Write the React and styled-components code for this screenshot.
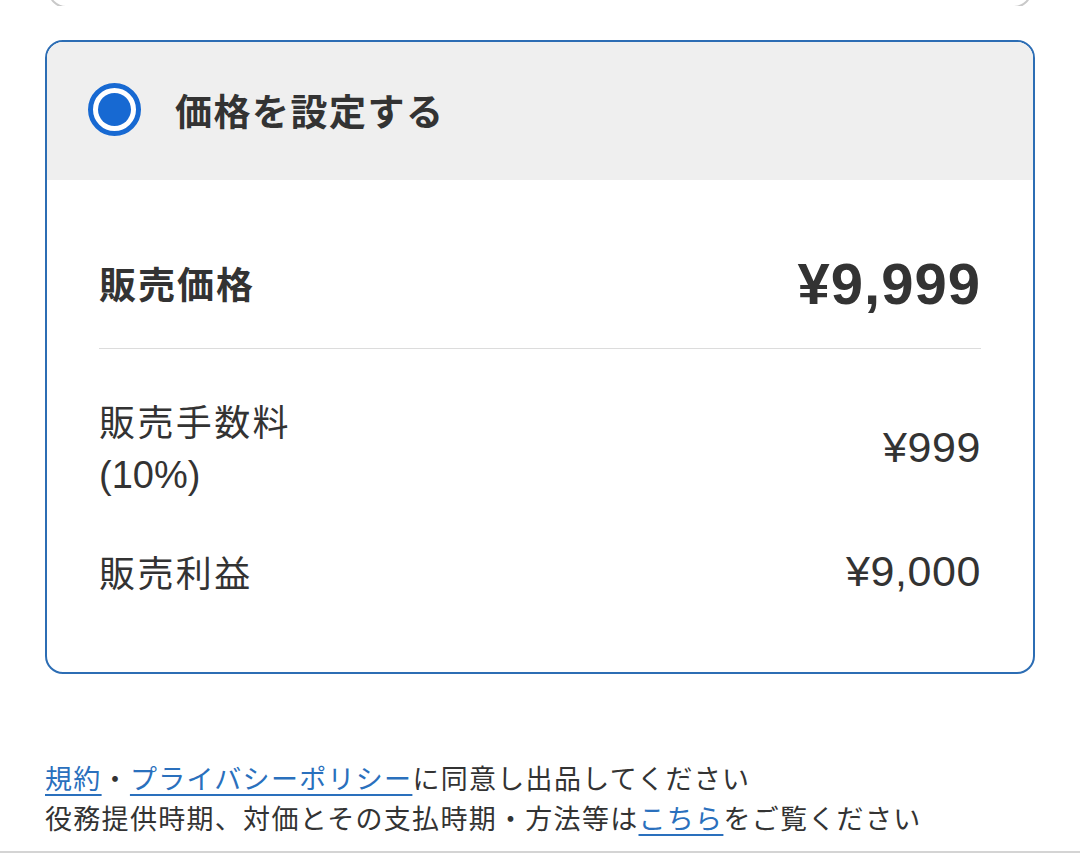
import styled, { createGlobalStyle } from "styled-components";

const GlobalStyle = createGlobalStyle`
    html, body {
        margin: 0;
        padding: 0;
        background: #ffffff;
    }
    body {
        font-family: "Liberation Sans", "Noto Sans CJK JP", sans-serif;
        color: #333333;
    }
`

const Page = styled.div`
    width: 1080px;
    height: 853px;
    overflow: hidden;
    display: flex;
    flex-direction: column;
    box-sizing: border-box;
    border-bottom: 2px solid #d4d4d4;
`

/* bottom edge of the option above, scrolled mostly out of view */
const PrevClip = styled.div`
    height: 6px;
    overflow: hidden;
    padding: 0 48px 0 48px;
`

const PrevOption = styled.div`
    height: 60px;
    margin-top: -56px;
    border: 2px solid #c9c9c9;
    border-radius: 18px;
`

const Card = styled.div`
    margin: 34px 45px 0 45px;
    border: 2px solid #2c6db4;
    border-radius: 18px;
    overflow: hidden;
`

const CardHeader = styled.div`
    height: 138px;
    background: #efefef;
    display: flex;
    align-items: center;
    padding-left: 41px;
    padding-bottom: 3px;
    box-sizing: border-box;
    gap: 34px;
`

const Radio = styled.span`
    width: 53px;
    height: 53px;
    box-sizing: border-box;
    border-radius: 50%;
    border: 5px solid #1769d2;
    background: #ffffff;
    display: flex;
    align-items: center;
    justify-content: center;
    &::after {
        content: "";
        width: 33px;
        height: 33px;
        border-radius: 50%;
        background: #1769d2;
    }
`

const Title = styled.span`
    font-family: "Noto Sans CJK JP", sans-serif;
    font-size: 37px;
    font-weight: 700;
    color: #333333;
    letter-spacing: 1.5px;
`

const CardBody = styled.div`
    padding: 68px 52px 75px 52px;
    display: flex;
    flex-direction: column;
`

const Row = styled.div`
    display: flex;
    justify-content: space-between;
    align-items: center;
    margin-top: ${props => props.gap || 0}px;
`

const Label = styled.div`
    font-family: "Noto Sans CJK JP", sans-serif;
    font-size: ${props => props.bold ? 37 : 36}px;
    font-weight: ${props => props.bold ? 700 : 400};
    line-height: ${props => props.bold ? 70 : 52}px;
    letter-spacing: ${props => props.bold ? 2 : 2.4}px;
    .latin {
        font-family: "Liberation Sans", sans-serif;
        letter-spacing: 0;
        font-size: 38px;
    }
`

const Amount = styled.div`
    font-family: "Liberation Sans", sans-serif;
    font-size: ${props => props.big ? 58 : 43}px;
    font-weight: ${props => props.big ? 700 : 400};
    letter-spacing: ${props => props.big ? 1 : 0.6}px;
    color: #333333;
`

const Divider = styled.hr`
    border: none;
    border-top: 1px solid #dcdcdc;
    margin: 30px 0 0 0;
`

const Notes = styled.div`
    margin: 84px 45px 0 45px;
    font-family: "Noto Sans CJK JP", sans-serif;
    font-size: 27px;
    line-height: 40px;
    color: #333333;
    letter-spacing: 1.3px;
`

const Link = styled.a`
    color: #2a70bd;
    text-decoration: underline;
    text-underline-offset: 5px;
    text-decoration-thickness: 2px;
`

export default function App() {
    return (
        <>
            <GlobalStyle />
            <Page>
                <PrevClip>
                    <PrevOption />
                </PrevClip>
                <Card>
                    <CardHeader>
                        <Radio />
                        <Title>価格を設定する</Title>
                    </CardHeader>
                    <CardBody>
                        <Row>
                            <Label bold>販売価格</Label>
                            <Amount big>¥9,999</Amount>
                        </Row>
                        <Divider />
                        <Row gap={45}>
                            <Label>
                                販売手数料<br />
                                <span className="latin">(10%)</span>
                            </Label>
                            <Amount>¥999</Amount>
                        </Row>
                        <Row gap={44}>
                            <Label>販売利益</Label>
                            <Amount>¥9,000</Amount>
                        </Row>
                    </CardBody>
                </Card>
                <Notes>
                    <Link href="#">規約</Link>・<Link href="#">プライバシーポリシー</Link>に同意し出品してください<br />
                    役務提供時期、対価とその支払時期・方法等は<Link href="#">こちら</Link>をご覧ください
                </Notes>
            </Page>
        </>
    )
}
